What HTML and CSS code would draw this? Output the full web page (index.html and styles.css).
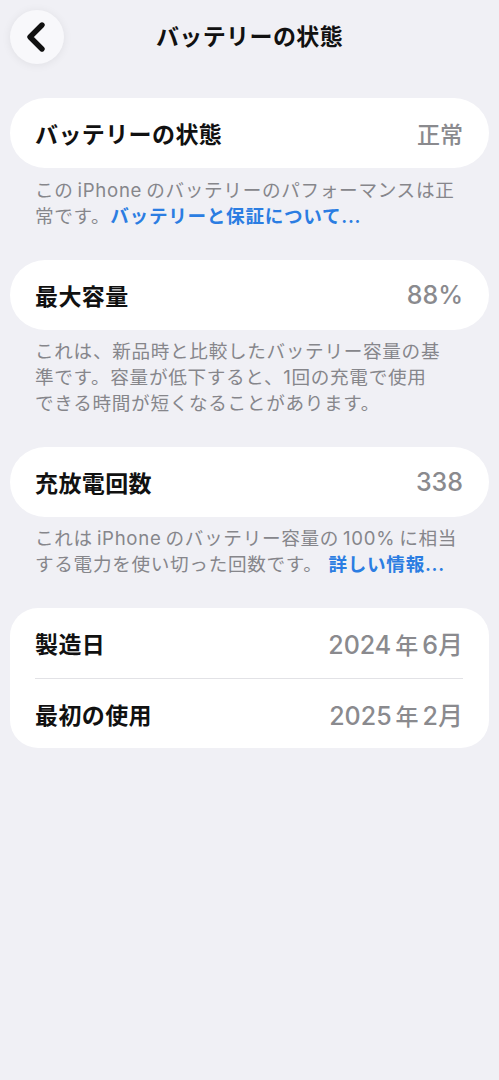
FILE: index.html
```html
<!DOCTYPE html>
<html lang="ja">
<head>
<meta charset="UTF-8" />
<meta name="viewport" content="width=device-width, initial-scale=1" />
<title>バッテリーの状態</title>
<link rel="stylesheet" href="styles.css">
</head>
<body>

<header class="topbar">
  <a class="back" href="#" title="戻る">
    <svg width="20" height="32" viewBox="0 0 20 32">
      <path d="M16 4 L4 16 L16 28" fill="none" stroke="#111" stroke-width="5.4" stroke-linecap="round" stroke-linejoin="round"/>
    </svg>
  </a>
  <h1>バッテリーの状態</h1>
</header>

<main>
  <section class="group">
    <div class="card pill">
      <div class="row">
        <span class="label">バッテリーの状態</span>
        <span class="value kana">正常</span>
      </div>
    </div>
    <p class="note">この<span class="lt">iPhone</span>のバッテリーのパフォーマンスは正<br>常です。<a href="#">バッテリーと保証について...</a></p>
  </section>

  <section class="group">
    <div class="card pill">
      <div class="row">
        <span class="label">最大容量</span>
        <span class="value">88%</span>
      </div>
    </div>
    <p class="note">これは、新品時と比較したバッテリー容量の基<br>準です。容量が低下すると、1回の充電で使用<br>できる時間が短くなることがあります。</p>
  </section>

  <section class="group">
    <div class="card pill">
      <div class="row">
        <span class="label">充放電回数</span>
        <span class="value">338</span>
      </div>
    </div>
    <p class="note">これは<span class="lt">iPhone</span>のバッテリー容量の<span class="lt">100%</span>に相当<br>する電力を使い切った回数です。 <a href="#">詳しい情報...</a></p>
  </section>

  <section class="group">
    <div class="card">
      <div class="row">
        <span class="label">製造日</span>
        <span class="value">2024<span class="lt">年</span>6月</span>
      </div>
      <div class="row">
        <span class="label">最初の使用</span>
        <span class="value">2025<span class="lt">年</span>2月</span>
      </div>
    </div>
  </section>
</main>

</body>
</html>
```

FILE: styles.css
```css
body {
  margin: 0;
  padding: 0;
  background: #f0f0f5;
  font-family: Inter, "Noto Sans CJK JP", sans-serif;
  color: #111;
  min-height: 1080px;
}

.topbar {
  position: relative;
  height: 74px;
  padding: 10px 10px 0;
  box-sizing: border-box;
}

.back {
  display: flex;
  align-items: center;
  justify-content: center;
  width: 54px;
  height: 54px;
  border-radius: 50%;
  background: #f8f8fb;
  box-shadow: 0 1px 10px rgba(0,0,0,0.07);
  text-decoration: none;
  padding-right: 3px;
  box-sizing: border-box;
}

h1 {
  position: absolute;
  left: 0;
  right: 0;
  top: 21px;
  margin: 0;
  text-align: center;
  font-size: 23px;
  font-weight: 700;
  line-height: 32px;
  letter-spacing: 0.4px;
}

main {
  padding: 24px 10px 0;
}

.card {
  background: white;
  border-radius: 28px;
  padding: 0 26px 0 25px;
}

.card.pill {
  border-radius: 35px;
}

.row {
  display: flex;
  justify-content: space-between;
  align-items: center;
  height: 70px;
}

.row + .row {
  border-top: 1px solid #e2e2e6;
  height: 69px;
}

.label {
  font-size: 23px;
  font-weight: 600;
  letter-spacing: 0.4px;
}

.value {
  font-size: 25px;
  color: #8a8a8e;
  font-weight: 500;
}

.value.kana {
  font-size: 23px;
}

/* small gaps iOS puts between latin and kana */
.lt {
  margin: 0 4px;
}

.value .lt {
  font-size: 23px;
}

.note {
  margin: 0;
  padding: 8px 25px 31px;
  font-size: 18.6px;
  line-height: 26px;
  color: #86868b;
  letter-spacing: 0.7px;
  white-space: nowrap;
}

.group:first-child .note {
  padding-top: 9px;
}

.note a {
  color: #2b7de2;
  font-weight: 600;
  text-decoration: none;
}
```
